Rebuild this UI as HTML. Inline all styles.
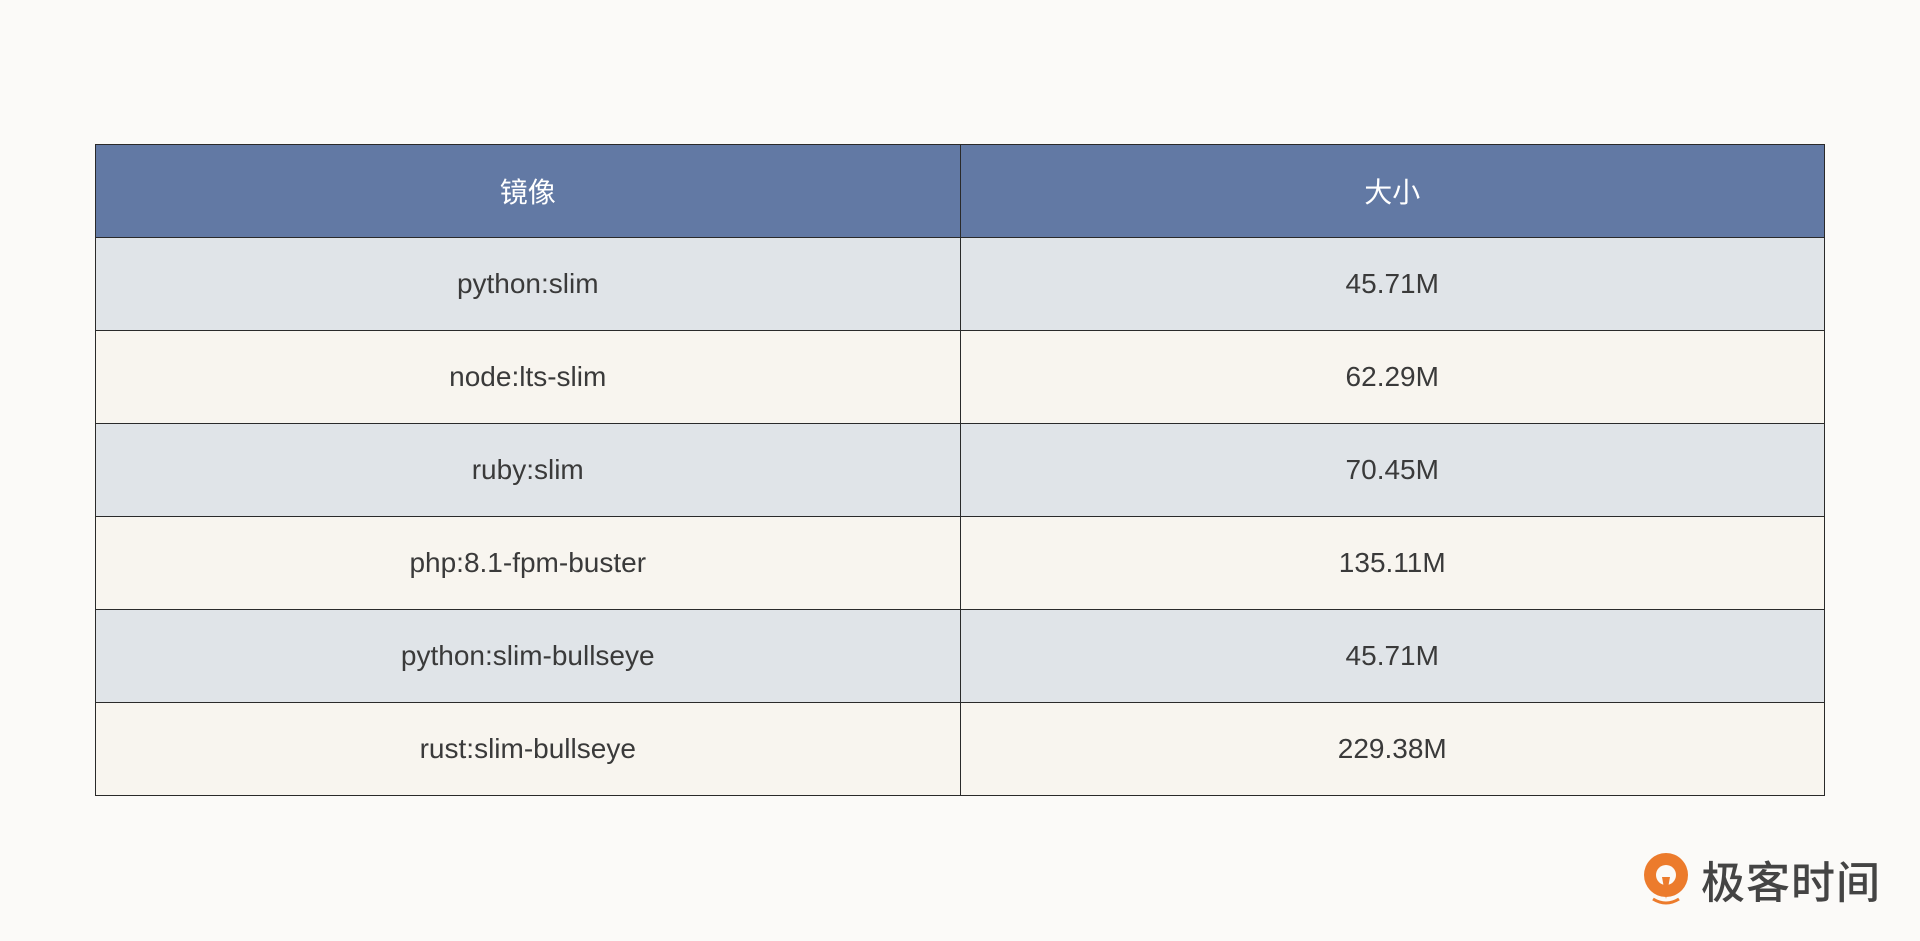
<!DOCTYPE html>
<html><head><meta charset="utf-8"><style>
html,body{margin:0;padding:0;width:1920px;height:941px;background:#fbfaf8;overflow:hidden}
table{position:absolute;left:95px;top:144px;width:1730px;border-collapse:collapse;font-family:"Liberation Sans","Noto Sans CJK SC",sans-serif;font-size:28px;color:#3a3a3a}
td,th{border:1px solid #2a2a2a;text-align:center;height:92px;padding:0;width:50%}
th{background:#6279a4;color:#fff;font-weight:normal}
tr.a td{background:#e0e4e8}
tr.b td{background:#f8f5ef}
.logo{position:absolute;left:1641px;top:847px;display:flex;align-items:center}
.logo span{font-family:"Noto Sans CJK SC",sans-serif;font-size:44px;color:#444;font-weight:500;margin-left:10px;letter-spacing:1px}
</style></head><body>
<table>
<tr><th>镜像</th><th>大小</th></tr>
<tr class="a"><td>python:slim</td><td>45.71M</td></tr>
<tr class="b"><td>node:lts-slim</td><td>62.29M</td></tr>
<tr class="a"><td>ruby:slim</td><td>70.45M</td></tr>
<tr class="b"><td>php:8.1-fpm-buster</td><td>135.11M</td></tr>
<tr class="a"><td>python:slim-bullseye</td><td>45.71M</td></tr>
<tr class="b"><td>rust:slim-bullseye</td><td>229.38M</td></tr>
</table>
<div class="logo">
<svg width="50" height="56" viewBox="0 0 50 56">
<circle cx="25" cy="24" r="22" fill="#ec7b2c"/>
<circle cx="25" cy="24" r="10" fill="#fbfaf8"/>
<path d="M21 26 L25 48 L29 26 Z" fill="#ec7b2c"/>
<path d="M12 48 Q25 56 38 48" stroke="#ec7b2c" stroke-width="3" fill="none"/>
</svg>
<span>极客时间</span>
</div>
</body></html>
